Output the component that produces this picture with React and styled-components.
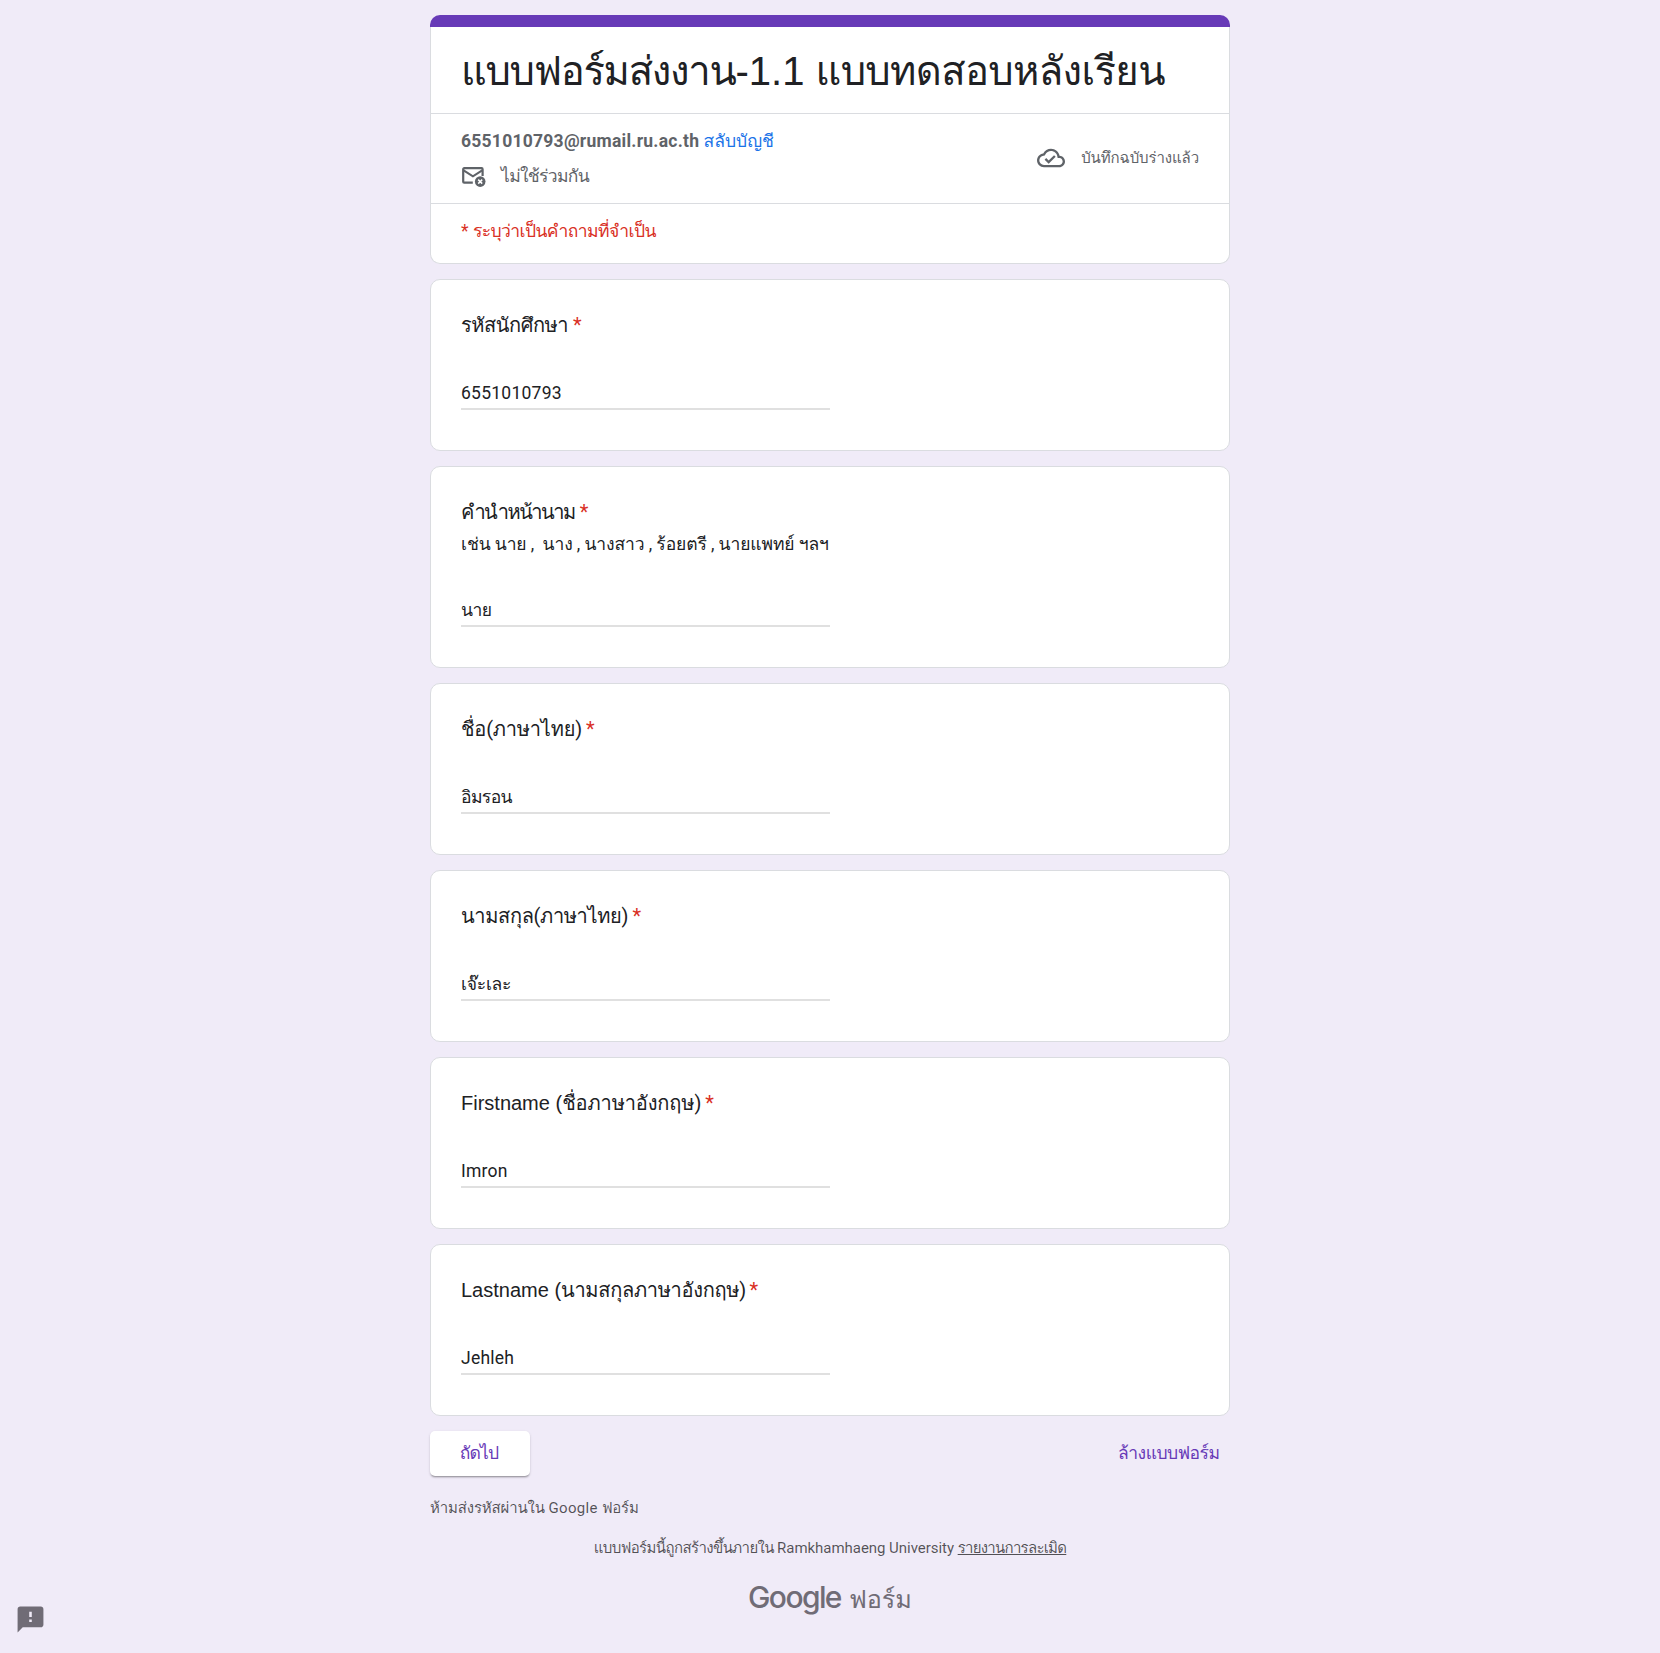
import React from "react";
import styled, { createGlobalStyle } from "styled-components";

const Global = createGlobalStyle`
  *, *::before, *::after { box-sizing: border-box; }
  html, body { margin: 0; background: #f0ebf8; }
  body { font-family: Roboto, Loma, "Noto Sans Thai", "Noto Sans", sans-serif; color: #202124; }
`;

const Page = styled.div`
  position: relative;
  min-height: 1653px;
  padding-top: 15px;
  display: flex;
  flex-direction: column;
  align-items: center;
`;

const Column = styled.main`
  width: 800px;
  display: flex;
  flex-direction: column;
  gap: 15px;
`;

const Card = styled.section`
  background: #fff;
  border: 1px solid #dadce0;
  border-radius: 10px;
`;

const Header = styled.header`
  display: flex;
  flex-direction: column;
`;

const HeaderCard = styled(Card)`
  height: 237px;
  border-top: 0;
  border-radius: 0 0 10px 10px;
`;

const Accent = styled.div`
  height: 12px;
  border-radius: 10px 10px 0 0;
  background: #673ab7;
`;

const Title = styled.h1`
  margin: 0;
  height: 86px;
  padding: 17px 30px 0;
  font-size: 40px;
  line-height: 54px;
  font-weight: 400;
  white-space: nowrap;
`;

const Run = styled.span`
  font-family: ${(p) => p.$font || "inherit"};
  letter-spacing: ${(p) => p.$ls || 0}px;
  white-space: pre;
`;

const Account = styled.div`
  height: 91px;
  border-top: 1px solid #dadce0;
  border-bottom: 1px solid #dadce0;
  padding: 0 30px;
  display: flex;
  justify-content: space-between;
  color: #5f6368;
`;

const AccountInfo = styled.div`
  display: flex;
  flex-direction: column;
  padding-top: 15px;
  font-size: 17.5px;
  line-height: 25px;
`;

const Email = styled.strong`
  font-weight: 700;
  letter-spacing: 0.25px;
`;

const SwitchLink = styled.a`
  color: #1a73e8;
`;

const Shared = styled.div`
  display: flex;
  align-items: center;
  gap: 15px;
  margin-top: 8px;
  height: 30px;
  padding-bottom: 1px;
  svg { margin-top: 1px; }
`;

const Draft = styled.div`
  display: flex;
  align-items: center;
  gap: 16px;
  padding-bottom: 1px;
  font-size: 15px;
`;

const RequiredNote = styled.div`
  padding: 15px 30px 0;
  font-size: 17.5px;
  line-height: 25px;
  color: #d93025;
`;

const QuestionCard = styled(Card)`
  height: ${(p) => (p.$tall ? 202 : 172)}px;
  padding: 30px 30px 0;
`;

const Label = styled.div`
  font-size: 20px;
  height: 30px;
  line-height: 30px;
  white-space: pre;
`;

const Star = styled.span`
  color: #d93025;
  margin-left: ${(p) => p.$gap}px;
`;

const Hint = styled.div`
  font-size: 17.5px;
  height: 30px;
  line-height: 34px;
  letter-spacing: -0.1px;
  white-space: pre;
`;

const Answer = styled.div`
  width: 369px;
  height: 41px;
  margin-top: 29px;
  padding-top: 9px;
  border-bottom: 2px solid #e0e0e0;
  font-size: 17.5px;
  line-height: 30px;
  letter-spacing: ${(p) => p.$ls}px;
  white-space: pre;
`;

const Actions = styled.div`
  height: 45px;
  display: flex;
  justify-content: space-between;
  align-items: center;
  font-size: 17.5px;
  color: #673ab7;
`;

const NextButton = styled.button`
  width: 100px;
  height: 45px;
  border: 0;
  padding: 0 2px 1px 0;
  border-radius: 5px;
  background: #fff;
  color: inherit;
  font: inherit;
  letter-spacing: -0.8px;
  box-shadow: 0 2px 2px -1px rgba(0, 0, 0, 0.35), 0 1px 3px rgba(0, 0, 0, 0.12);
`;

const ClearLink = styled.a`
  padding: 0 10.5px 1px 0;
  letter-spacing: -0.5px;
`;

const Warning = styled.div`
  font-size: 15px;
  height: 20px;
  line-height: 20px;
  color: rgba(0, 0, 0, 0.66);
  margin-top: 7px;
`;

const Origin = styled.div`
  display: flex;
  justify-content: center;
  height: 20px;
  margin-top: 5px;
  font-size: 15px;
  line-height: 20px;
  color: rgba(0, 0, 0, 0.66);
`;

const ReportLink = styled(Run)`
  text-decoration: underline;
  text-decoration-thickness: 1px;
  text-underline-offset: 1px;
`;

const Brand = styled.div`
  display: flex;
  justify-content: center;
  align-items: baseline;
  gap: 8px;
  height: 50px;
  margin-top: 5px;
  line-height: 38px;
  color: #706c76;
`;

const Wordmark = styled.span`
  font-family: Inter, sans-serif;
  font-size: 30px;
  font-weight: 500;
  letter-spacing: -1.6px;
`;

const Product = styled.span`
  font-size: 25.2px;
`;

const Feedback = styled.button`
  position: absolute;
  left: 14.5px;
  top: 1604px;
  width: 31px;
  height: 31px;
  padding: 0;
  border: 0;
  background: none;
  color: #706c76;
  svg { display: block; }
`;

const MailIcon = () => (
  <svg width="25" height="20" viewBox="0 0 25 20" fill="none" stroke="#5f6368">
    <path d="M11.8 15.7H3.2a1 1 0 0 1-1-1V2.2a1 1 0 0 1 1-1h17.4a1 1 0 0 1 1 1V9" strokeWidth="2.2" />
    <path d="M2.6 3.4l9.3 5.9 9.3-5.9" strokeWidth="2.1" />
    <circle cx="19.2" cy="14.6" r="5.3" fill="#5f6368" stroke="none" />
    <path d="M17.2 12.6l4 4M21.2 12.6l-4 4" stroke="#fff" strokeWidth="1.5" />
  </svg>
);

const CloudDoneIcon = () => (
  <svg width="28" height="28" viewBox="0 0 24 24" fill="#5f6368">
    <path d="M19.35 10.04C18.67 6.59 15.64 4 12 4 9.11 4 6.6 5.64 5.35 8.04 2.34 8.36 0 10.91 0 14c0 3.31 2.69 6 6 6h13c2.76 0 5-2.24 5-5 0-2.64-2.05-4.78-4.65-4.96zM19 18H6c-2.21 0-4-1.79-4-4 0-2.05 1.53-3.76 3.56-3.97l1.07-.11.5-.95C8.08 7.14 9.94 6 12 6c2.62 0 4.88 1.86 5.39 4.43l.3 1.5 1.53.11c1.56.1 2.78 1.41 2.78 2.96 0 1.65-1.35 3-3 3zm-9-3.82l-2.09-2.09L6.5 13.5 10 17l6.01-6.01-1.41-1.41z" />
  </svg>
);

const FeedbackIcon = () => (
  <svg width="31" height="31" viewBox="0 0 24 24" fill="currentColor">
    <path d="M20 2H4c-1.1 0-1.99.9-1.99 2L2 22l4-4h14c1.1 0 2-.9 2-2V4c0-1.1-.9-2-2-2zm-7 12h-2v-2h2v2zm0-4h-2V6h2v4z" />
  </svg>
);

const questions = [
  { label: "รหัสนักศึกษา", ls: -0.45, gap: 5, value: "6551010793", vls: 0.25 },
  { label: "คำนำหน้านาม", ls: -1.5, gap: 5, hint: "เช่น นาย ,  นาง , นางสาว , ร้อยตรี , นายแพทย์ ฯลฯ", value: "นาย", vls: -0.5 },
  { label: "ชื่อ(ภาษาไทย)", ls: -0.2, gap: 4, value: "อิมรอน", vls: -0.6 },
  { label: "นามสกุล(ภาษาไทย)", ls: -0.35, gap: 4.5, value: "เจ๊ะเละ", vls: -0.25 },
  { latin: "Firstname (", label: "ชื่อภาษาอังกฤษ)", ls: -0.12, gap: 4, value: "Imron", vls: 0.25 },
  { latin: "Lastname (", label: "นามสกุลภาษาอังกฤษ)", ls: -0.3, gap: 3.7, value: "Jehleh", vls: 0.25 },
];

export default function App() {
  return (
    <>
      <Global />
      <Page>
        <Column>
          <Header>
            <Accent />
            <HeaderCard>
              <Title>
                <Run $ls={-1.3}>แบบฟอร์มส่งงาน</Run>
                <Run $font="Liberation Sans">-1.1 </Run>
                <Run $ls={-0.65}>แบบทดสอบหลังเรียน</Run>
              </Title>
              <Account>
                <AccountInfo>
                  <div>
                    <Email>6551010793@rumail.ru.ac.th</Email>{" "}
                    <SwitchLink>สลับบัญชี</SwitchLink>
                  </div>
                  <Shared>
                    <MailIcon />
                    <Run $ls={-0.67}>ไม่ใช้ร่วมกัน</Run>
                  </Shared>
                </AccountInfo>
                <Draft>
                  <CloudDoneIcon />
                  <Run $ls={-0.1}>บันทึกฉบับร่างแล้ว</Run>
                </Draft>
              </Account>
              <RequiredNote>
                <Run>* </Run>
                <Run $ls={-0.58}>ระบุว่าเป็นคำถามที่จำเป็น</Run>
              </RequiredNote>
            </HeaderCard>
          </Header>
          {questions.map((q) => (
            <QuestionCard key={q.value} $tall={!!q.hint}>
              <Label>
                {q.latin && <Run $font="Liberation Sans">{q.latin}</Run>}
                <Run $ls={q.ls}>{q.label}</Run>
                <Star $gap={q.gap}>*</Star>
              </Label>
              {q.hint && <Hint>{q.hint}</Hint>}
              <Answer $ls={q.vls}>{q.value}</Answer>
            </QuestionCard>
          ))}
          <Actions>
            <NextButton>ถัดไป</NextButton>
            <ClearLink>ล้างแบบฟอร์ม</ClearLink>
          </Actions>
          <Warning>
            <Run $ls={-0.15}>ห้ามส่งรหัสผ่านใน </Run>
            <Run $ls={0.35}>Google </Run>
            <Run $ls={-0.25}>ฟอร์ม</Run>
          </Warning>
          <Origin>
            <Run $ls={-0.6}>แบบฟอร์มนี้ถูกสร้างขึ้นภายใน </Run>
            <Run $ls={-0.04}>Ramkhamhaeng University </Run>
            <ReportLink $ls={-0.73}>รายงานการละเมิด</ReportLink>
          </Origin>
          <Brand>
            <Wordmark>Google</Wordmark>
            <Product>ฟอร์ม</Product>
          </Brand>
        </Column>
        <Feedback aria-label="feedback">
          <FeedbackIcon />
        </Feedback>
      </Page>
    </>
  );
}
